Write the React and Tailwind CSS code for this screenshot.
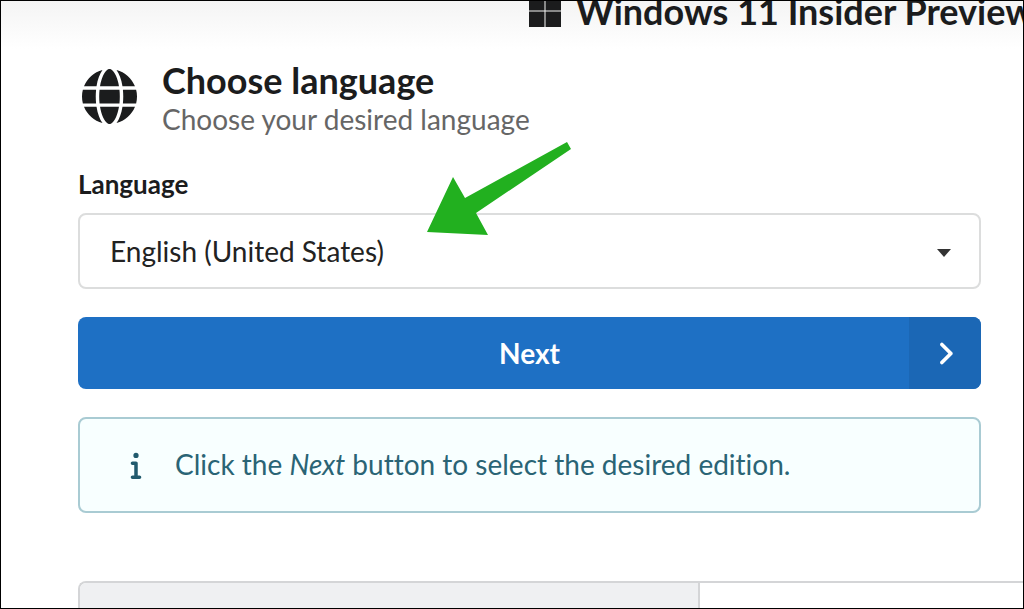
import { FaGlobe, FaInfo, FaAngleRight } from 'react-icons/fa6';

const LANGUAGES = ['English (United States)'];

function WindowsLogo() {
  return (
    <svg viewBox="0 0 32 32" className="w-8 h-8 shrink-0" fill="currentColor" aria-hidden="true">
      <path d="M0 0h15.5v15.5H0zM16.5 0H32v15.5H16.5zM0 16.5h15.5V32H0zM16.5 16.5H32V32H16.5z" />
    </svg>
  );
}

function Arrow() {
  return (
    <svg
      viewBox="0 0 144 94"
      className="absolute left-[426px] top-[140px] w-[144px] h-[94px] pointer-events-none"
      fill="#22b01f"
      aria-hidden="true"
    >
      <path d="M0 91L26 36L38 57L140 1L144 8L49 72L61 94z" />
    </svg>
  );
}

function TopBar() {
  return (
    <header className="h-12 overflow-hidden bg-linear-to-b from-[#f4f4f4] to-white pl-[528px]">
      <div className="flex items-center gap-[15px] -mt-3 whitespace-nowrap">
        <WindowsLogo />
        <span className="text-[36px] leading-[44px] font-bold">Windows 11 Insider Preview</span>
      </div>
    </header>
  );
}

export default function App() {
  return (
    <div className="relative h-screen overflow-hidden border border-black bg-white font-['Lato',sans-serif] text-[#1b1c1d] [font-variant-ligatures:none]">
      <TopBar />
      <main>
        <div className="pl-[77px] pr-[42px]">
          <div className="flex items-center pt-[9px]">
            <FaGlobe className="w-[55px] h-[55px] ml-1 mr-[25px] mt-[-2px] shrink-0" />
            <div>
              <h1 className="text-[36px] leading-[44px] font-bold">Choose language</h1>
              <p className="text-[28px] leading-[34px] text-[#666]">Choose your desired language</p>
            </div>
          </div>

          <label htmlFor="language" className="block mt-[31px] mb-3 text-[26px] leading-[34px] font-bold">
            Language
          </label>
          <div className="relative">
            <select
              id="language"
              className="block w-full h-[76px] appearance-none rounded-lg border-2 border-[#dcdddd] bg-white pl-[30px] pr-16 text-[28px] text-[#222]"
            >
              {LANGUAGES.map((name) => (
                <option key={name}>{name}</option>
              ))}
            </select>
            <svg
              viewBox="0 0 14 8"
              className="absolute right-[30px] top-9 w-[14px] h-2 pointer-events-none"
              fill="#333"
              aria-hidden="true"
            >
              <path d="M0 0H14L7 8z" />
            </svg>
          </div>

          <button
            type="button"
            className="mt-7 flex w-full h-[72px] items-stretch overflow-hidden rounded-lg bg-[#1e70c4] pl-[72px] text-[28px] font-bold text-white"
          >
            <span className="flex-1 self-center">Next</span>
            <span className="flex w-[72px] items-center justify-center bg-[#1b67b5]">
              <FaAngleRight className="w-[29px] h-[29px]" />
            </span>
          </button>

          <div className="mt-7 flex h-24 items-center rounded-lg border-2 border-[#a9cbd3] bg-[#f8ffff] pl-[34px] text-[28px] text-[#2a6475]">
            <FaInfo className="w-11 h-7 mr-[17px] shrink-0 text-[#215a6d]" />
            <p className="pb-0.5">
              Click the <em>Next</em> button to select the desired edition.
            </p>
          </div>
        </div>

        <div className="mt-[68px] ml-[77px] flex h-20 rounded-tl-lg border-t-2 border-l-2 border-[#d4d5d7]">
          <div className="w-[620px] rounded-tl-md border-r-2 border-[#d4d5d7] bg-[#eff0f2]" />
          <div className="flex-1" />
        </div>
      </main>
      <Arrow />
    </div>
  );
}
